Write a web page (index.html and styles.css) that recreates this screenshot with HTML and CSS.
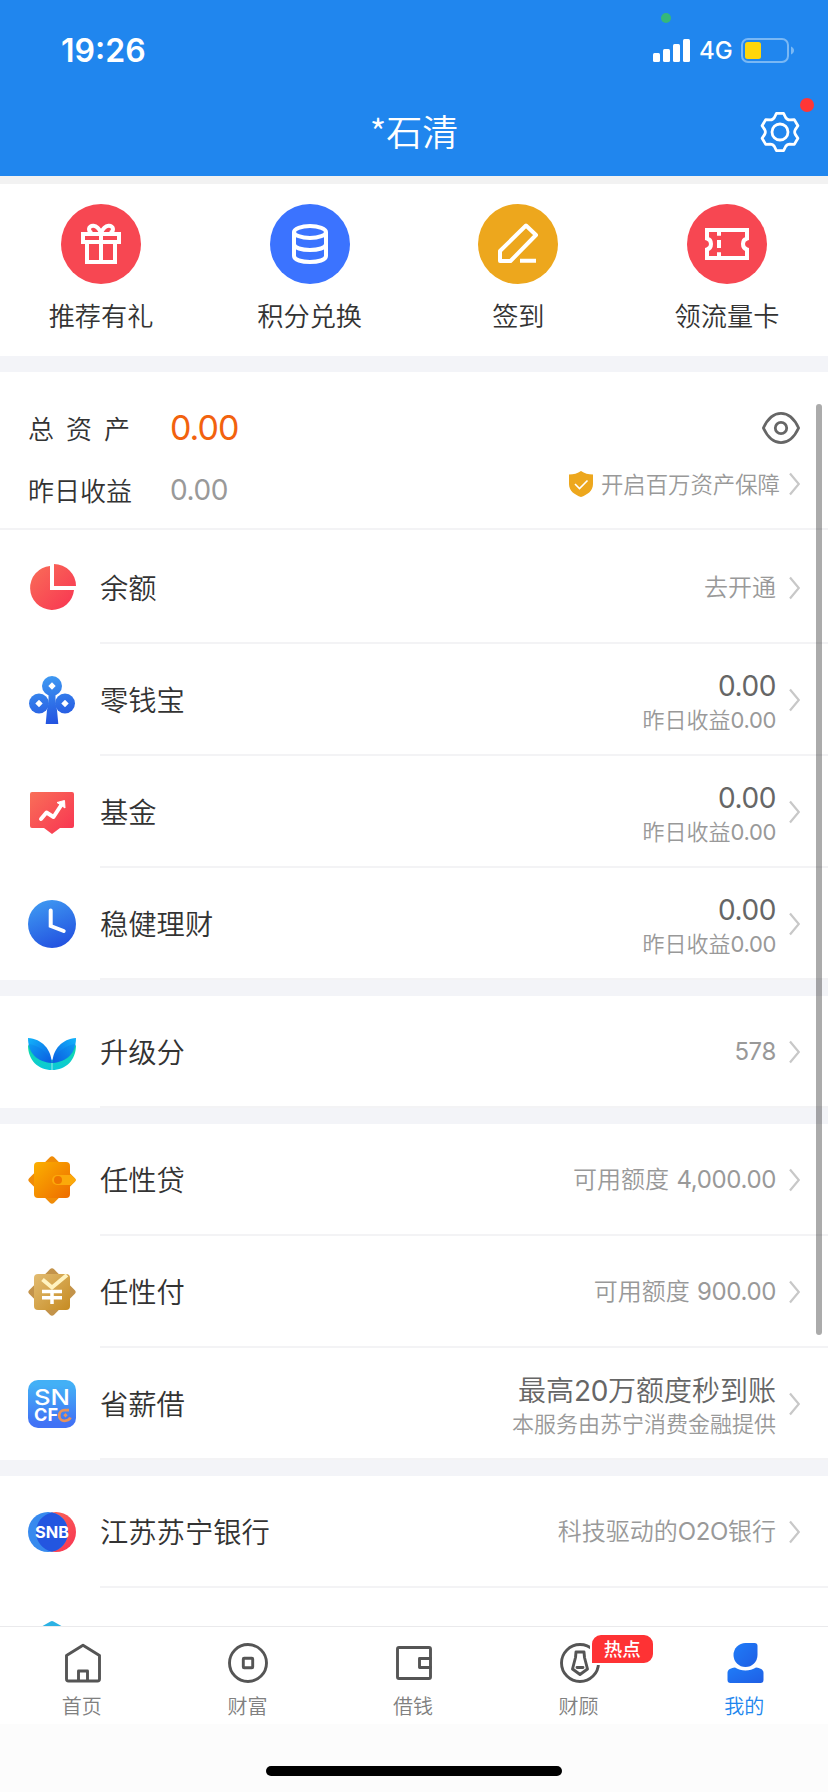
FILE: index.html
```html
<!DOCTYPE html>
<html lang="zh-CN">
<head>
<meta charset="UTF-8" />
<meta name="viewport" content="width=device-width, initial-scale=1" />
<title>我的</title>
<link rel="stylesheet" href="styles.css">
</head>
<body>

<!-- 公用图形 -->
<svg class="defs" width="0" height="0">
  <defs>
    <linearGradient id="red" x1="0" y1="0" x2="1" y2="1"><stop offset="0" stop-color="#f96f58"/><stop offset="1" stop-color="#f83352"/></linearGradient>
    <linearGradient id="blue" x1="0.2" y1="0" x2="0.6" y2="1"><stop offset="0" stop-color="#3f9af2"/><stop offset="1" stop-color="#2352e0"/></linearGradient>
    <linearGradient id="clover" gradientUnits="userSpaceOnUse" x1="18" y1="0" x2="28" y2="48"><stop offset="0" stop-color="#3f9af2"/><stop offset="1" stop-color="#2352e0"/></linearGradient>
    <linearGradient id="orange" x1="0" y1="0" x2="1" y2="1"><stop offset="0" stop-color="#fbb000"/><stop offset="1" stop-color="#ee6c00"/></linearGradient>
    <linearGradient id="gold" x1="0" y1="0" x2="1" y2="1"><stop offset="0" stop-color="#e2bc72"/><stop offset="1" stop-color="#c68b22"/></linearGradient>
    <linearGradient id="leaf" x1="0" y1="0" x2="1" y2="1"><stop offset="0" stop-color="#12b4fb"/><stop offset="1" stop-color="#0b5ee2"/></linearGradient>
    <linearGradient id="leaf2" x1="1" y1="0" x2="0" y2="1"><stop offset="0" stop-color="#12b4fb"/><stop offset="1" stop-color="#0b5ee2"/></linearGradient>
    <linearGradient id="green" x1="0" y1="0" x2="0" y2="1"><stop offset="0" stop-color="#12e0a0"/><stop offset="1" stop-color="#0cc6dc"/></linearGradient>
    <linearGradient id="app" x1="0" y1="0" x2="0" y2="1"><stop offset="0.1" stop-color="#43b0f6"/><stop offset="0.9" stop-color="#4172f5"/></linearGradient>
    <linearGradient id="user" x1="0" y1="0" x2="1" y2="1"><stop offset="0" stop-color="#1f7cf8"/><stop offset="1" stop-color="#1f5ee4"/></linearGradient>
    <symbol id="arrow" viewBox="0 0 12 24"><path d="M2 1.500 10.800 12 2 22.500" fill="none" stroke="#c8c8c8" stroke-width="2.2"/></symbol>
  </defs>
</svg>

<div class="app">
  <header>
    <div class="status-bar">
      <span class="time">19:26</span>
      <span class="status-icons">
        <i class="privacy-dot"></i>
        <svg class="signal" viewBox="0 0 37 23" fill="#fff"><rect y="14" width="7" height="9" rx="1.5"/><rect x="10" y="10" width="7" height="13" rx="1.5"/><rect x="20" y="5" width="7" height="18" rx="1.5"/><rect x="30" width="7" height="23" rx="1.5"/></svg>
        <span class="network">4G</span>
        <svg class="battery" viewBox="0 0 53 25"><rect x="1" y="1" width="46" height="23" rx="6" fill="none" stroke="#7ab8f4" stroke-width="2"/><rect x="4" y="4" width="16" height="17" rx="2.5" fill="#ffd60a"/><path d="M50 8.500c4 1.500 4 6.500 0 8z" fill="#7ab8f4"/></svg>
      </span>
    </div>
    <div class="title-bar">
      <h1>*石清</h1>
      <button class="settings">
        <svg viewBox="-20 -20 40 40" fill="none" stroke="#fff" stroke-width="2.800" stroke-linejoin="round">
          <path d="M-3.600-18.600H3.600L5.600-14.500Q7-12.100 9.700-12.100L14.300-12.400 17.900-6.200 15.300-2.400Q14 0 15.300 2.400L17.900 6.200 14.300 12.400 9.700 12.100Q7 12.100 5.600 14.500L3.600 18.600H-3.600L-5.600 14.500Q-7 12.100-9.700 12.100L-14.300 12.400-17.900 6.200-15.300 2.400Q-14 0-15.300-2.400L-17.900-6.200-14.300-12.400-9.700-12.100Q-7-12.100-5.600-14.500Z"/>
          <circle r="8"/>
        </svg>
        <i class="dot"></i>
      </button>
    </div>
  </header>

  <main>
    <section class="quick">
      <div class="quick-item">
        <svg viewBox="0 0 80 80" fill="none" stroke="#fff" stroke-width="4"><circle cx="40" cy="40" r="40" fill="#f74752" stroke="none"/><path d="M22 30H58V38H22zM26 38V58H54V38M40 29V58M40 29C36 19 28 21 28 25Q28 28 31 29M40 29C44 19 52 21 52 25Q52 28 49 29"/></svg>
        <span>推荐有礼</span>
      </div>
      <div class="quick-item">
        <svg viewBox="0 0 80 80" fill="none" stroke="#fff" stroke-width="4"><circle cx="40" cy="40" r="40" fill="#3b73ff" stroke="none"/><ellipse cx="40" cy="28" rx="16" ry="6"/><path d="M24 28V52C24 60 56 60 56 52V28M24 40C24 48 56 48 56 40"/></svg>
        <span>积分兑换</span>
      </div>
      <div class="quick-item">
        <svg viewBox="0 0 80 80" fill="none" stroke="#fff" stroke-width="4" stroke-linejoin="round"><circle cx="40" cy="40" r="40" fill="#eda71d" stroke="none"/><path d="M48 21.500 58 31 32.500 57H22V47zM42 56.700H58"/></svg>
        <span>签到</span>
      </div>
      <div class="quick-item">
        <svg viewBox="0 0 80 80" fill="none" stroke="#fff" stroke-width="4"><circle cx="40" cy="40" r="40" fill="#f74752" stroke="none"/><path d="M20 26H60V34.500Q56 35.500 56 40T60 45.500V54H20V45.500Q24 44.500 24 40T20 34.500zM32 28V31.700M32 36V44M32 48.300V52"/></svg>
        <span>领流量卡</span>
      </div>
    </section>

    <section class="assets">
      <div class="asset-names">
        <div class="asset-line"><span class="asset-label spaced">总资产</span><span class="total num">0.00</span></div>
        <div class="asset-line"><span class="asset-label">昨日收益</span><span class="income num">0.00</span></div>
      </div>
      <div class="asset-side">
        <svg class="eye" viewBox="0 0 40 34" fill="none" stroke="#666" stroke-width="2.800"><path d="M2.400 17C7 7 13 2.400 20 2.400S33 7 37.600 17C33 27 27 31.600 20 31.600S7 27 2.400 17z" stroke-linejoin="round"/><circle cx="20" cy="17" r="5.700"/></svg>
        <div class="protect">
          <svg class="shield" viewBox="0 0 24 26"><path d="M12 0Q17 3.500 24 3.500V13C24 20 18 24 12 26 6 24 0 20 0 13V3.500Q7 3.500 12 0z" fill="#eda71d"/><path d="M6 13 10.500 17.500 18.500 9.500" fill="none" stroke="#fff" stroke-width="1.600"/></svg>
          <span>开启百万资产保障</span>
          <svg class="arrow"><use href="#arrow"/></svg>
        </div>
      </div>
    </section>

    <section class="list">
      <div class="row">
        <svg class="icon" viewBox="0 0 48 48"><path d="M22 2A22 22 0 1 0 46 26H22zM26 0A22 22 0 0 1 48 22H26z" fill="url(#red)"/></svg>
        <div class="cell"><span class="name">余额</span><div class="value"><p>去开通</p></div><svg class="arrow"><use href="#arrow"/></svg></div>
      </div>
      <div class="row">
        <svg class="icon" viewBox="0 0 48 48"><g fill="url(#clover)"><circle cx="24" cy="10" r="10"/><circle cx="11" cy="27.500" r="10"/><circle cx="37" cy="27.500" r="10"/><path d="M20.500 18H27.500V27L29 34 30.300 48H17.700L19 34 20.500 27z"/></g><path d="M24 6.300l3.700 3.700-3.700 3.700-3.700-3.700zM11 23.800l3.700 3.700-3.700 3.700-3.700-3.700zM37 23.800l3.700 3.700-3.700 3.700-3.700-3.700z" fill="#fff"/></svg>
        <div class="cell"><span class="name">零钱宝</span><div class="value"><strong class="num">0.00</strong><small>昨日收益<span class="num">0.00</span></small></div><svg class="arrow"><use href="#arrow"/></svg></div>
      </div>
      <div class="row">
        <svg class="icon" viewBox="0 0 48 48"><path d="M4 4H44a2 2 0 0 1 2 2V38a2 2 0 0 1-2 2H32L24 46 16 40H4a2 2 0 0 1-2-2V6a2 2 0 0 1 2-2z" fill="url(#red)"/><path d="M13 31 18.500 24.500 25.500 29 33 17.500" fill="none" stroke="#fff" stroke-width="4" stroke-linecap="round" stroke-linejoin="round"/><path d="M29 14.500 36.500 12.500 37 20z" fill="#fff" stroke="#fff" stroke-linejoin="round"/></svg>
        <div class="cell"><span class="name">基金</span><div class="value"><strong class="num">0.00</strong><small>昨日收益<span class="num">0.00</span></small></div><svg class="arrow"><use href="#arrow"/></svg></div>
      </div>
      <div class="row">
        <svg class="icon" viewBox="0 0 48 48"><circle cx="24" cy="24" r="24" fill="url(#blue)"/><path d="M22.700 10.500V26L35.700 31" fill="none" stroke="#fff" stroke-width="4" stroke-linecap="round"/></svg>
        <div class="cell"><span class="name">稳健理财</span><div class="value"><strong class="num">0.00</strong><small>昨日收益<span class="num">0.00</span></small></div><svg class="arrow"><use href="#arrow"/></svg></div>
      </div>
    </section>

    <section class="list">
      <div class="row">
        <svg class="icon" viewBox="0 0 48 48"><path d="M0 17C0 32 10 42 24 42S48 32 48 17L24 32z" fill="url(#green)"/><path d="M0 10C14 11 23 21 23.800 35 9 34 0 25 0 10z" fill="url(#leaf)"/><path d="M48 10C34 11 25 21 24.200 35 39 34 48 25 48 10z" fill="url(#leaf2)"/><path d="M0 16C9 17 20 23 23.800 35 11 34 2 28 0 16zM48 16C39 17 28 23 24.200 35 37 34 46 28 48 16z" fill="#0a4fd8" opacity="0.150"/><path d="M24 35V42" stroke="#fff" opacity="0.600"/></svg>
        <div class="cell"><span class="name">升级分</span><div class="value"><p class="num">578</p></div><svg class="arrow"><use href="#arrow"/></svg></div>
      </div>
    </section>

    <section class="list">
      <div class="row">
        <svg class="icon" viewBox="0 0 48 48"><rect x="6.500" y="6.500" width="35" height="35" rx="3" transform="rotate(45 24 24)" fill="#f08c08"/><rect x="6" y="6" width="36" height="36" rx="4" fill="url(#orange)"/><path d="M29 19H43L47 22.500Q48.500 24 47 25.500L43 29H29a5 5 0 0 1 0-10z" fill="#fba90a"/><circle cx="30" cy="24" r="4" fill="#ef7600"/></svg>
        <div class="cell"><span class="name">任性贷</span><div class="value"><p>可用额度 <span class="num">4,000.00</span></p></div><svg class="arrow"><use href="#arrow"/></svg></div>
      </div>
      <div class="row">
        <svg class="icon" viewBox="0 0 48 48"><rect x="6.500" y="6.500" width="35" height="35" rx="3" transform="rotate(45 24 24)" fill="#c3934a"/><rect x="6" y="6" width="36" height="36" rx="4" fill="url(#gold)"/><path d="M14.500 11.500 24 19.500 39 7" fill="none" stroke="#fff3c0" stroke-width="4"/><path d="M14 23.500H34M14 29.700H34M24 23.500V36" fill="none" stroke="#fff" stroke-width="3.500"/></svg>
        <div class="cell"><span class="name">任性付</span><div class="value"><p>可用额度 <span class="num">900.00</span></p></div><svg class="arrow"><use href="#arrow"/></svg></div>
      </div>
      <div class="row">
        <svg class="icon logo" viewBox="0 0 48 48"><rect width="48" height="48" rx="10" fill="url(#app)"/><text class="thin" x="6" y="25.300" font-size="22" textLength="36" lengthAdjust="spacingAndGlyphs">SN</text><text class="bold" x="6" y="41.300" font-size="17.500" textLength="24" lengthAdjust="spacingAndGlyphs">CF</text><path d="M41 30.200H36.500a5.300 5.300 0 0 0 0 10.600Q41 40.800 42.500 37.500" fill="none" stroke="#e8925a" stroke-width="2.800"/><path d="M37.500 33l2.200 2.200-2.200 2.200-2.200-2.200z" fill="#e8925a"/></svg>
        <div class="cell"><span class="name">省薪借</span><div class="value"><strong>最高<span class="num">20</span>万额度秒到账</strong><small>本服务由苏宁消费金融提供</small></div><svg class="arrow"><use href="#arrow"/></svg></div>
      </div>
    </section>

    <section class="list">
      <div class="row">
        <svg class="icon logo" viewBox="0 0 48 48"><circle cx="28" cy="24" r="20" fill="url(#red)"/><circle cx="20" cy="24" r="20" fill="#378aee"/><path d="M24 4.400A20 20 0 0 1 24 43.600 20 20 0 0 1 24 4.400z" fill="#2356e0"/><text class="bold" x="7" y="29.500" font-size="15.500" textLength="34" lengthAdjust="spacingAndGlyphs">SNB</text></svg>
        <div class="cell"><span class="name">江苏苏宁银行</span><div class="value"><p>科技驱动的<span class="latin">O2O</span>银行</p></div><svg class="arrow"><use href="#arrow"/></svg></div>
      </div>
      <div class="row">
        <svg class="icon" viewBox="0 0 48 48"><path d="M22.500 1.500Q24 .5 25.500 1.500L44 12V36L24 47 4 36V12z" fill="#2cb2e4"/></svg>
        <div class="cell"></div>
      </div>
    </section>
    <i class="scrollbar"></i>
  </main>

  <nav>
    <a class="tab">
      <svg viewBox="0 0 40 40"><path d="M20 2.300 36.500 12.500V36a2 2 0 0 1-2 2H5.500a2 2 0 0 1-2-2V12.500zM15.500 38V28H24.500V38"/></svg>
      <span>首页</span>
    </a>
    <a class="tab">
      <svg viewBox="0 0 40 40"><circle cx="20" cy="20" r="18.500"/><rect x="15.300" y="15.300" width="9.400" height="9.400" rx="0.800"/></svg>
      <span>财富</span>
    </a>
    <a class="tab">
      <svg viewBox="0 0 40 40"><rect x="3.500" y="4.500" width="33" height="31" rx="1.500"/><path d="M36.500 15.500H25.500V24.500H36.500"/></svg>
      <span>借钱</span>
    </a>
    <a class="tab">
      <svg viewBox="0 0 40 40"><circle cx="20" cy="20" r="18.500"/><path d="M16 9H24L24.500 14.500 27.500 26 20 31.500 12.500 26 15.500 14.500zM17 24.500H23"/></svg>
      <b class="badge">热点</b>
      <span>财顾</span>
    </a>
    <a class="tab active">
      <svg viewBox="0 0 40 40"><path d="M20.500 0H29.500a3 3 0 0 1 3 3V12A12 12 0 1 1 20.500 0z"/><path d="M10 24.500C16 28.500 25 28.500 31 24.500 36 25 38.500 27 38.500 30V37a3 3 0 0 1-3 3H5.500a3 3 0 0 1-3-3V30C2.500 27 5 25 10 24.500z"/></svg>
      <span>我的</span>
    </a>
  </nav>
  <footer><i class="home-bar"></i></footer>
</div>

</body>
</html>
```

FILE: styles.css
```css
* {
  box-sizing: border-box;
  margin: 0; padding: 0;
}
body {
  font-family: "Noto Sans CJK SC", sans-serif;
  font-weight: 350;
  background: #fff;
  color: #333;
  overflow: hidden;
}
svg {
  display: block;
  flex-shrink: 0;
}
.defs {
  position: absolute;
}
.app {
  width: 828px;
  height: 1792px;
  display: flex;
  flex-direction: column;
}
.num, .latin {
  font-family: Inter, sans-serif;
  font-weight: 400;
  letter-spacing: -0.015em;
}
span.num, span.latin {
  line-height: 1;
}

/* Header */
header {
  height: 176px;
  background: #2086ee;
  color: #fff;
}
.status-bar {
  height: 88px;
  padding: 12px 34px 0 61px;
  display: flex;
  justify-content: space-between;
  align-items: center;
  font-family: Inter, sans-serif;
}
.time {
  font-size: 32px;
  font-weight: 600;
}
.status-icons {
  position: relative;
  display: flex;
  align-items: center;
}
.privacy-dot {
  position: absolute;
  left: 8px;
  top: -23px;
  width: 10px;
  height: 10px;
  border-radius: 50%;
  background: #35b87a;
}
.signal {
  width: 37px;
  height: 23px;
}
.network {
  width: 51px;
  padding-left: 9px;
  font-size: 24px;
  font-weight: 500;
  line-height: 29px;
}
.battery {
  width: 53px;
  height: 25px;
}
.title-bar {
  height: 88px;
  padding: 0 28px;
  display: grid;
  grid-template-columns: 40px 1fr 40px;
  align-items: center;
}
h1 {
  grid-column: 2;
  padding-bottom: 4px;
  text-align: center;
  font-size: 36px;
  font-weight: 350;
  line-height: 52px;
}
.settings {
  position: relative;
  width: 40px;
  height: 40px;
  border: none;
  background: none;
}
.dot {
  position: absolute;
  right: -14px;
  top: -14px;
  width: 14px;
  height: 14px;
  border-radius: 50%;
  background: #ff3636;
}

/* Content */
main {
  position: relative;
  flex: 1;
  min-height: 0;
  overflow: hidden;
  background: #f3f4f8;
  border-top: 8px solid #f2f2f2;
}
.quick {
  height: 172px;
  padding: 20px 48px 0;
  display: flex;
  justify-content: space-between;
  background: #fff;
  margin-bottom: 16px;
}
.quick-item {
  width: 106px;
  display: flex;
  flex-direction: column;
  align-items: center;
  gap: 13px;
  font-size: 26.2px;
  line-height: 36px;
  white-space: nowrap;
}
.quick-item svg {
  width: 80px;
  height: 80px;
}
.assets {
  height: 158px;
  padding: 34px 28px 0;
  display: flex;
  justify-content: space-between;
  background: #fff;
  border-bottom: 2px solid #f3f3f5;
}
.asset-names {
  display: flex;
  flex-direction: column;
  gap: 18px;
}
.asset-line {
  height: 44px;
  display: flex;
  align-items: center;
}
.asset-label {
  width: 142px;
  padding-bottom: 2px;
  font-size: 26px;
}
.spaced {
  letter-spacing: 12px;
}
.total {
  font-size: 34px;
  letter-spacing: -0.03em;
  color: #f2620e;
}
.income {
  font-size: 28px;
  color: #999;
}
.asset-side {
  display: flex;
  flex-direction: column;
  align-items: flex-end;
  gap: 20px;
  padding-top: 5px;
}
.eye {
  width: 40px;
  height: 34px;
  margin-right: -1px;
}
.protect {
  display: flex;
  align-items: center;
  font-size: 22.4px;
  line-height: 36px;
  color: #999;
}
.protect span {
  padding-bottom: 2px;
}
.shield {
  width: 24px;
  height: 26px;
  margin-right: 8px;
}
.arrow {
  width: 12px;
  height: 24px;
}
.protect .arrow {
  margin-left: 8px;
}
.list {
  background: #fff;
  margin-bottom: 16px;
}
.row {
  height: 112px;
  padding-left: 28px;
  display: flex;
  align-items: center;
  gap: 24px;
}
.assets + .list {
  padding-top: 2px;
}
.icon {
  width: 48px;
  height: 48px;
}
.logo text {
  font-family: Inter, sans-serif;
  fill: #fff;
}
.logo .thin {
  font-weight: 500;
}
.logo .bold {
  font-weight: 700;
}
.cell {
  flex: 1;
  height: 112px;
  padding: 2px 28px 0 0;
  display: flex;
  align-items: center;
  border-bottom: 2px solid #f3f3f5;
}
.name {
  flex: 1;
  padding-bottom: 4px;
  font-size: 28.3px;
}
.value {
  text-align: right;
  color: #999;
  margin-right: 12px;
}
.value p {
  padding-bottom: 4px;
  font-size: 24px;
  line-height: 36px;
  word-spacing: 2px;
}
.value p.num {
  padding-bottom: 0;
}
.value strong {
  display: block;
  font-size: 28px;
  font-weight: 350;
  line-height: 36px;
  color: #666;
}
.value strong.num {
  padding-top: 3px;
  font-weight: 400;
  line-height: 33px;
}
.value small {
  display: block;
  margin-top: -1px;
  font-size: 22px;
  line-height: 32px;
}
.scrollbar {
  position: absolute;
  right: 6px;
  top: 220px;
  width: 6px;
  height: 931px;
  border-radius: 3px;
  background: rgba(0,0,0,0.33);
}

/* Bottom tabs */
nav {
  height: 98px;
  display: flex;
  border-top: 1px solid #eaeaec;
  background: #fff;
}
.tab {
  position: relative;
  flex: 1;
  padding-top: 16px;
  display: flex;
  flex-direction: column;
  align-items: center;
  gap: 8px;
  font-size: 20px;
  line-height: 30px;
  color: #808080;
}
.tab svg {
  width: 40px;
  height: 40px;
  fill: none;
  stroke: #555;
  stroke-width: 2.9;
  stroke-linejoin: round;
  stroke-linecap: round;
}
.tab span {
  margin-right: 2px;
}
.tab.active {
  color: #2086ee;
}
.tab.active svg {
  fill: url(#user);
  stroke: none;
}
.badge {
  position: absolute;
  left: 93px;
  top: 6px;
  width: 65px;
  height: 32px;
  border: 2px solid #fff;
  border-radius: 11px 11px 11px 0;
  background: #fe3234;
  color: #fff;
  font-size: 18.5px;
  font-weight: 500;
  line-height: 26px;
  text-align: center;
}
footer {
  height: 68px;
  padding-top: 42px;
  background: #fcfcfc;
}
.home-bar {
  display: block;
  width: 296px;
  height: 10px;
  margin: 0 auto;
  border-radius: 5px;
  background: #000;
}
```
